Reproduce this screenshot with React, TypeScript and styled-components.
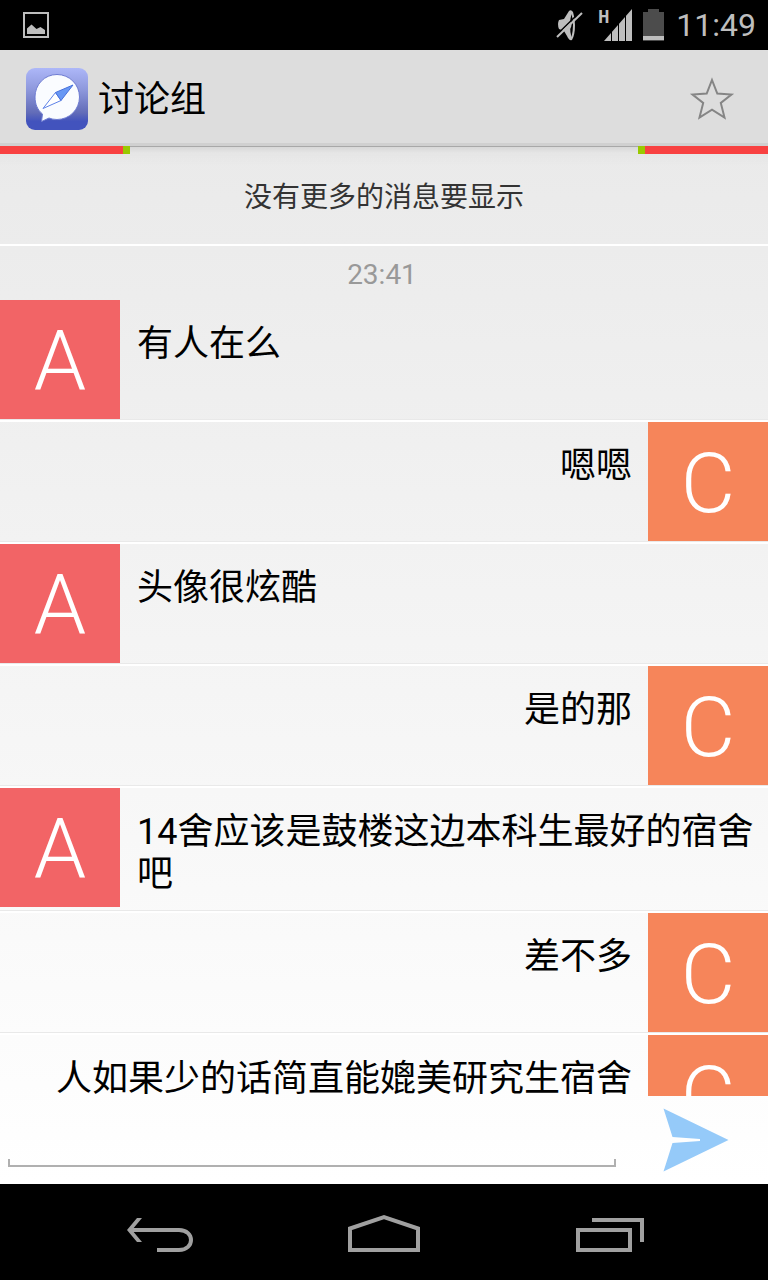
import React from "react";
import styled, { createGlobalStyle } from "styled-components";

const GlobalStyle = createGlobalStyle`
  * { box-sizing: border-box; }
  body {
    margin: 0;
    background: #000;
    font-family: Roboto, "Noto Sans CJK SC", sans-serif;
  }
  svg { display: block; }
  button { margin: 0; padding: 0; border: 0; background: none; cursor: pointer; }
`;

const Screen = styled.div`
  display: flex;
  flex-direction: column;
  height: 100vh;
  overflow: hidden;
`;

const StatusBar = styled.div`
  display: flex;
  flex: none;
  align-items: center;
  justify-content: space-between;
  height: 50px;
  padding: 0 12px 0 23px;
  background: #000;
  color: #bebebe;
`;

const StatusGroup = styled.div`
  display: flex;
  align-items: center;
`;

const Network = styled.div`
  display: flex;
  align-items: flex-start;
  margin: 0 11px 0 15px;
`;

const NetworkType = styled.span`
  width: 6px;
  font: bold 18px/16px "Liberation Sans Narrow", "Roboto Condensed", Roboto, sans-serif;
`;

const Clock = styled.time`
  margin-left: 12px;
  font-size: 32px;
  line-height: 50px;
`;

const Page = styled.div`
  display: flex;
  flex: 1;
  flex-direction: column;
  min-height: 0;
  background: linear-gradient(#e8e8e8, #fff);
`;

const ActionBar = styled.header`
  display: flex;
  flex: none;
  align-items: center;
  height: 96px;
  padding: 4px 32px 0 26px;
  background: #ddd;
  border-bottom: 3px solid #d0d0d0;
`;

const Title = styled.h1`
  flex: 1;
  margin: 0;
  padding: 2px 0 0 10px;
  font-size: 36px;
  font-weight: 400;
  line-height: 42px;
  color: #000;
`;

const History = styled.main`
  position: relative;
  flex: 1;
  min-height: 0;
  overflow: hidden;
`;

const Refresh = styled.div<{ $side: "left" | "right" }>`
  position: absolute;
  top: 0;
  ${(p) => p.$side}: 0;
  width: 130px;
  height: 8px;
  background: #f84141;
  border-${(p) => (p.$side === "left" ? "right" : "left")}: 7px solid #99c900;
`;

const Notice = styled.p`
  margin: 0;
  height: 100px;
  padding-top: 2px;
  border-bottom: 2px solid #fff;
  background: linear-gradient(#a8a8a8 1px, rgba(0, 0, 0, 0.08) 1px, rgba(0, 0, 0, 0.02) 7px, transparent 20px);
  font-size: 28px;
  line-height: 100px;
  text-align: center;
  color: #333;
`;

const Stamp = styled.time`
  display: block;
  height: 54px;
  padding-right: 4px;
  font-size: 28px;
  line-height: 58px;
  text-align: center;
  color: #999;
`;

const Messages = styled.ol`
  margin: 0;
  padding: 0;
  list-style: none;
`;

const Message = styled.li<{ $own: boolean }>`
  display: flex;
  flex-direction: ${(p) => (p.$own ? "row-reverse" : "row")};
  align-items: flex-start;
  min-height: 122px;
  border-bottom: 2px solid #fff;
  box-shadow: inset 0 -1px 0 #e9e9e9;
`;

const Avatar = styled.div<{ $own: boolean }>`
  flex: none;
  width: 120px;
  height: 119px;
  background: ${(p) => (p.$own ? "#f6855a" : "#f26466")};
  color: #fff;
  font-size: 84px;
  font-weight: 300;
  line-height: 124px;
  text-align: center;
`;

const Bubble = styled.p<{ $own: boolean }>`
  flex: 1;
  margin: 0;
  padding: ${(p) => (p.$own ? "23px 16px 16px 8px" : "23px 8px 16px 17px")};
  font-size: 36px;
  line-height: 42px;
  text-align: ${(p) => (p.$own ? "right" : "left")};
  color: #000;
`;

const Composer = styled.form`
  display: flex;
  flex: none;
  align-items: center;
  height: 88px;
  padding-left: 8px;
`;

const Field = styled.input`
  flex: 1;
  min-width: 0;
  height: 54px;
  padding: 0 12px;
  border: 0;
  outline: 0;
  background:
    linear-gradient(#b0b0b0, #b0b0b0) left bottom / 2px 8px no-repeat,
    linear-gradient(#b0b0b0, #b0b0b0) right bottom / 2px 8px no-repeat,
    linear-gradient(#b0b0b0, #b0b0b0) left bottom / 100% 2px no-repeat;
  font: 36px/42px Roboto, "Noto Sans CJK SC", sans-serif;
`;

const SendButton = styled.button`
  display: flex;
  align-items: center;
  justify-content: center;
  width: 144px;
  height: 88px;
  margin-left: 8px;
`;

const NavBar = styled.nav`
  display: flex;
  flex: none;
  height: 96px;
  padding: 4px 48px 0;
  background: #000;
`;

const NavButton = styled.button`
  display: flex;
  flex: 1;
  align-items: center;
  justify-content: center;
`;

const messages = [
  { from: "A", text: "有人在么" },
  { from: "C", text: "嗯嗯" },
  { from: "A", text: "头像很炫酷" },
  { from: "C", text: "是的那" },
  { from: "A", text: "14舍应该是鼓楼这边本科生最好的宿舍吧" },
  { from: "C", text: "差不多" },
  { from: "C", text: "人如果少的话简直能媲美研究生宿舍" },
];

const PictureIcon = () => (
  <svg width="26" height="26" viewBox="0 0 26 26">
    <rect x="1" y="1" width="24" height="24" fill="none" stroke="#bebebe" strokeWidth="2" />
    <path d="M4 22V16.500L8.500 12.500L13.500 17L17.500 15L22 18V22Z" fill="#bebebe" />
  </svg>
);

const MutedIcon = () => (
  <svg width="27" height="32" viewBox="0 0 27 32">
    <path d="M3 11L8 10L13 2Q15 0 17 3Q19 9 19 16Q19 26 16 31Q13 32 11 27L8 22L3 20Q1 15 3 11Z" fill="#bebebe" />
    <path d="M15.500 5Q14 10 14 16Q14 23 15.500 28Q17 22 17 16Q17 10 15.500 5Z" fill="#000" />
    <path d="M14 12Q17 16 14 20Z" fill="#bebebe" />
    <path d="M1 25.500L24 3" stroke="#000" strokeWidth="1.500" />
    <path d="M1 28L26 4" stroke="#bebebe" strokeWidth="2" />
  </svg>
);

const SignalIcon = () => (
  <svg width="28" height="32" viewBox="0 0 28 32">
    <path d="M0 32L28 0V32Z" fill="#bebebe" />
    <path d="M7.500 0V32M14.500 0V32M21.500 0V32" stroke="#000" strokeWidth="1" />
  </svg>
);

const BatteryIcon = () => (
  <svg width="21" height="32" viewBox="0 0 21 32">
    <path d="M0 3H5V0H16V3H21V32H0Z" fill="#4c4c4c" />
    <path d="M0 27H21V31H0Z" fill="#bebebe" />
  </svg>
);

const AppLogo = () => (
  <svg width="62" height="62" viewBox="0 0 62 62">
    <defs>
      <linearGradient id="logoFill" x1="0" y1="0" x2="0" y2="1">
        <stop offset="0" stopColor="#adb7f8" />
        <stop offset="0.35" stopColor="#8e98dc" />
        <stop offset="0.72" stopColor="#626cb8" />
        <stop offset="0.86" stopColor="#4253bd" />
        <stop offset="1" stopColor="#4253bd" />
      </linearGradient>
    </defs>
    <rect width="62" height="62" rx="9" fill="url(#logoFill)" />
    <path
      d="M31 6.500C43.500 6.500 53.500 16.500 53.500 29C53.500 41.500 43.500 51.500 31 51.500C28 51.500 25.500 51 23 50L15.500 53.500L16.500 46C11.500 42 9 36 9 29C9 16.500 18.500 6.500 31 6.500Z"
      fill="#fafcff"
      stroke="#6d7bd2"
      strokeWidth="1"
    />
    <path d="M17 40.500L29.500 24.500L35 32.500Z" fill="#fff" stroke="#5e82e8" strokeWidth="1" />
    <path d="M29.500 24.500L47 17L35 32.500Z" fill="#6898f4" stroke="#4770dc" strokeWidth="1" />
  </svg>
);

const StarIcon = () => (
  <svg width="48" height="48" viewBox="0 0 48 48">
    <path
      d="M24 5L29.300 18.500L43.500 19.500L32.800 28L36.500 42.500L24 34.700L11.500 42.500L15.200 28L4.500 19.500L18.700 18.500Z"
      fill="none"
      stroke="#858585"
      strokeWidth="2"
    />
  </svg>
);

const SendIcon = () => (
  <svg width="66" height="64" viewBox="0 0 66 64">
    <path d="M0.500 0.500L65.500 32L0.500 63.500L9.500 35L37 33V31L9.500 29Z" fill="#95caf9" />
  </svg>
);

const BackIcon = () => (
  <svg width="72" height="40" viewBox="0 0 72 40" fill="none" stroke="#a0a0a0" strokeWidth="4">
    <path d="M7 16H55C71 16 71 36 55 36H33" />
    <path d="M18 4H13L3 16L13 28H18L8 16Z" fill="#a0a0a0" stroke="none" />
  </svg>
);

const HomeIcon = () => (
  <svg width="72" height="40" viewBox="0 0 72 40" fill="none" stroke="#a0a0a0" strokeWidth="4">
    <path d="M2 36V14.500L36 3L70 14.500V36Z" />
  </svg>
);

const RecentsIcon = () => (
  <svg width="72" height="40" viewBox="0 0 72 40" fill="none" stroke="#a0a0a0" strokeWidth="4">
    <path d="M6 16H58V36H6Z" />
    <path d="M20 6H70V28" />
  </svg>
);

export default function App() {
  return (
    <Screen>
      <GlobalStyle />
      <StatusBar>
        <PictureIcon />
        <StatusGroup>
          <MutedIcon />
          <Network>
            <NetworkType>H</NetworkType>
            <SignalIcon />
          </Network>
          <BatteryIcon />
          <Clock>11:49</Clock>
        </StatusGroup>
      </StatusBar>
      <Page>
        <ActionBar>
          <AppLogo />
          <Title>讨论组</Title>
          <button type="button" aria-label="收藏">
            <StarIcon />
          </button>
        </ActionBar>
        <History>
          <Notice>没有更多的消息要显示</Notice>
          <Refresh $side="left" />
          <Refresh $side="right" />
          <Stamp>23:41</Stamp>
          <Messages>
            {messages.map((m, i) => {
              const own = m.from === "C";
              return (
                <Message key={i} $own={own}>
                  <Avatar $own={own}>{m.from}</Avatar>
                  <Bubble $own={own}>{m.text}</Bubble>
                </Message>
              );
            })}
          </Messages>
        </History>
        <Composer onSubmit={(e) => e.preventDefault()}>
          <Field type="text" aria-label="消息" />
          <SendButton type="submit" aria-label="发送">
            <SendIcon />
          </SendButton>
        </Composer>
      </Page>
      <NavBar>
        <NavButton type="button" aria-label="返回">
          <BackIcon />
        </NavButton>
        <NavButton type="button" aria-label="主页">
          <HomeIcon />
        </NavButton>
        <NavButton type="button" aria-label="最近任务">
          <RecentsIcon />
        </NavButton>
      </NavBar>
    </Screen>
  );
}
